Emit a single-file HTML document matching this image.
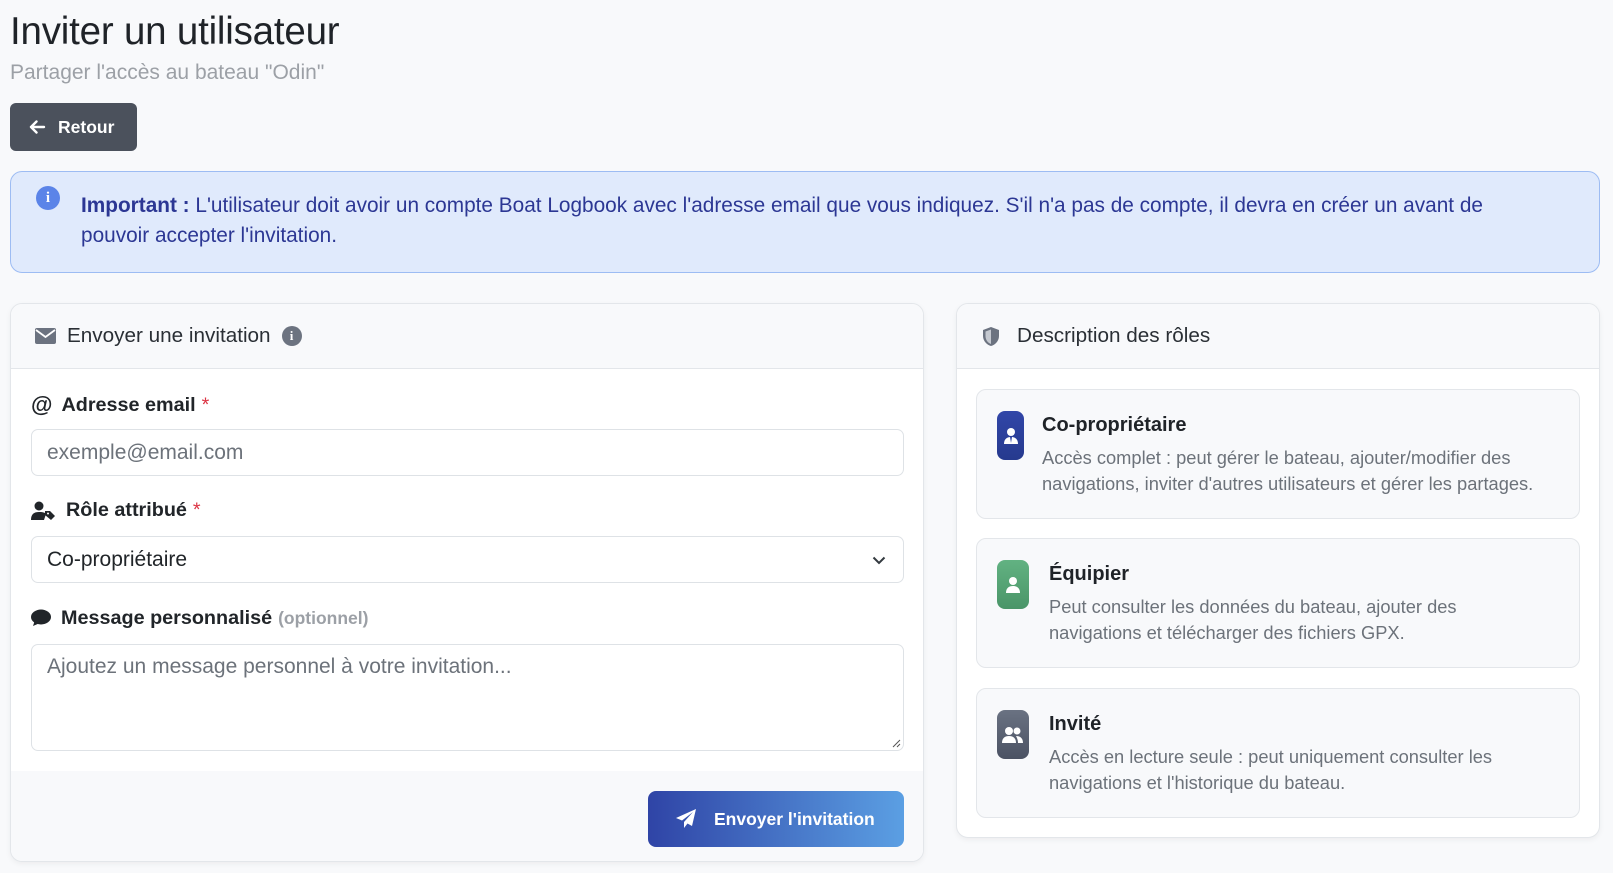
<!DOCTYPE html>
<html><head><meta charset="utf-8">
<style>
*{box-sizing:border-box;margin:0;padding:0}
body{width:1613px;height:873px;overflow:hidden;background:#f8f9fb;font-family:"Liberation Sans",sans-serif;color:#212529;position:relative}
.abs{position:absolute}
h1{position:absolute;left:10px;top:10px;font-size:38.5px;font-weight:400;color:#1f2328;letter-spacing:-0.2px}
.sub{left:10px;top:61px;font-size:21px;color:#9ca0a6}
.btn{left:10px;top:103px;width:127px;height:48px;background:#4b515c;border-radius:6px;color:#fff;font-size:17.5px;font-weight:700;display:flex;align-items:center;padding-left:18px}
.btn svg{margin-right:12px}
.alert{left:10px;top:171px;width:1590px;height:102px;background:#e0eafc;border:1px solid #9dbcf3;border-radius:12px}
.alert .ic{position:absolute;left:25px;top:14px;width:24px;height:24px;border-radius:50%;background:#5b84e8;color:#fff;font-weight:700;font-size:15px;text-align:center;line-height:24px;font-family:"Liberation Serif",serif}
.alert p{position:absolute;left:70px;top:19px;width:1470px;font-size:20.8px;line-height:30px;color:#2c3794}
.card{background:#fff;border:1px solid #e3e6ea;border-radius:12px;box-shadow:0 2px 6px rgba(0,0,0,.05);overflow:hidden}
.head{height:65px;background:#f8f9fb;border-bottom:1px solid #e3e6ea;display:flex;align-items:center;font-size:20.7px;color:#2a2f35}
.lbl{position:absolute;font-size:19.8px;font-weight:700;color:#212529;display:flex;align-items:center}
.lbl .star{color:#dc3545;margin-left:6px;font-weight:400}
.inp{position:absolute;left:20px;width:873px;border:1px solid #dee2e6;border-radius:7px;background:#fff;font-size:21px;padding-left:15px}
.role{position:absolute;left:19px;width:604px;height:130px;background:#f8f9fb;border:1px solid #e3e6ea;border-radius:10px}
.role .ico{position:absolute;left:20px;top:21px;height:49px;border-radius:8px;display:flex;align-items:center;justify-content:center}
.role .t{position:absolute;top:24px;font-size:20px;font-weight:700;color:#1f2328}
.role .d{position:absolute;top:55px;font-size:18.3px;line-height:26px;color:#6c727a;width:510px}
</style></head><body>
<h1>Inviter un utilisateur</h1>
<div class="abs sub">Partager l'accès au bateau "Odin"</div>
<div class="abs btn"><svg width="18" height="16" viewBox="0 0 18 16"><path d="M16 8H3M8.5 2.5L3 8l5.5 5.5" stroke="#fff" stroke-width="2.4" fill="none" stroke-linecap="round" stroke-linejoin="round"/></svg>Retour</div>
<div class="abs alert"><div class="ic">i</div><p><b>Important :</b> L'utilisateur doit avoir un compte Boat Logbook avec l'adresse email que vous indiquez. S'il n'a pas de compte, il devra en créer un avant de pouvoir accepter l'invitation.</p></div>

<div class="abs card" style="left:10px;top:303px;width:914px;height:559px">
 <div class="head" style="padding-left:24px">
  <svg width="21" height="16" viewBox="0 0 21 16" style="margin-right:11px"><rect x="0" y="0" width="21" height="16" rx="2" fill="#6c7380"/><path d="M1 2l9.5 7L20 2" stroke="#fff" stroke-width="1.8" fill="none"/></svg>
  Envoyer une invitation
  <span style="display:inline-block;width:20px;height:20px;border-radius:50%;background:#6c7380;color:#fff;font-size:13px;font-weight:700;text-align:center;line-height:20px;margin-left:11px;font-family:'Liberation Serif',serif">i</span>
 </div>
 <div class="lbl" style="left:20px;top:88px"><span style="font-size:22px;margin-right:9px">@</span>Adresse email<span class="star">*</span></div>
 <div class="inp" style="top:125px;height:47px;line-height:45px;color:#6c727a">exemple@email.com</div>
 <div class="lbl" style="left:20px;top:195px"><svg width="25" height="20" viewBox="0 0 25 20" style="margin-right:10px"><circle cx="8" cy="5" r="4.5" fill="#212529"/><path d="M0 19c0-6 3-8 8-8s6 1 7 2l-2 6z" fill="#212529"/><path d="M14 10l5 0 5 5-4 4-6-5z" fill="#212529"/><circle cx="17" cy="12.5" r="1" fill="#fff"/></svg>Rôle attribué<span class="star">*</span></div>
 <div class="inp" style="top:232px;height:47px;line-height:45px;color:#212529">Co-propriétaire<svg width="14" height="9" viewBox="0 0 14 9" style="position:absolute;right:17px;top:19px"><path d="M1.5 1.5L7 7l5.5-5.5" stroke="#343a40" stroke-width="2" fill="none"/></svg></div>
 <div class="lbl" style="left:20px;top:303px"><svg width="20" height="19" viewBox="0 0 20 19" style="margin-right:10px"><ellipse cx="10" cy="8" rx="10" ry="7.5" fill="#212529"/><path d="M2 17l2-6 5 3z" fill="#212529"/></svg>Message personnalisé<span style="color:#9ca0a6;font-size:17.5px;margin-left:6px">(optionnel)</span></div>
 <div class="inp" style="top:340px;height:107px;padding-top:10px;color:#6c727a">Ajoutez un message personnel à votre invitation...<svg width="9" height="9" viewBox="0 0 9 9" style="position:absolute;right:2px;bottom:2px"><path d="M8 1L1 8M8 5L5 8" stroke="#555" stroke-width="1"/></svg></div>
 <div style="position:absolute;left:0;top:467px;width:914px;height:92px;background:#f8f9fb"></div>
 <div style="position:absolute;left:637px;top:487px;width:256px;height:56px;border-radius:8px;background:linear-gradient(90deg,#2f44a6,#5b9fe3);color:#fff;font-size:17.5px;font-weight:700;display:flex;align-items:center;padding-left:28px">
  <svg width="21" height="20" viewBox="0 0 21 20" style="margin-right:17px"><path d="M20 0L0 9l6 2.5L17 3 8 13v6l3.5-4.5L16 17z" fill="#fff"/></svg>Envoyer l'invitation</div>
</div>

<div class="abs card" style="left:956px;top:303px;width:644px;height:535px">
 <div class="head" style="padding-left:24px">
  <svg width="20" height="21" viewBox="0 0 20 21" style="margin-right:16px"><path d="M10 1L2 4v6c0 5 4 9 8 10 4-1 8-5 8-10V4z" fill="#6c7380"/><path d="M10 3.5v14.5c-3-1-5.5-4-5.5-8V5.5z" fill="#c5c9d0"/></svg>
  Description des rôles
 </div>
 <div class="role" style="top:85px">
  <div class="ico" style="width:27px;background:linear-gradient(#3146a8,#263a8e)"><svg width="16" height="18" viewBox="0 0 16 18"><circle cx="8" cy="5" r="4" fill="#fff"/><path d="M1 17c0-5 3-7 7-7s7 2 7 7z" fill="#fff"/><path d="M7 10l1 6 1-6z" fill="#2e44a4"/></svg></div>
  <div class="t" style="left:65px">Co-propriétaire</div>
  <div class="d" style="left:65px">Accès complet : peut gérer le bateau, ajouter/modifier des navigations, inviter d'autres utilisateurs et gérer les partages.</div>
 </div>
 <div class="role" style="top:234px">
  <div class="ico" style="width:32px;background:linear-gradient(#62b282,#4a9568)"><svg width="16" height="18" viewBox="0 0 16 18"><circle cx="8" cy="5" r="4" fill="#fff"/><path d="M1 17c0-5 3-7 7-7s7 2 7 7z" fill="#fff"/></svg></div>
  <div class="t" style="left:72px">Équipier</div>
  <div class="d" style="left:72px;width:480px">Peut consulter les données du bateau, ajouter des navigations et télécharger des fichiers GPX.</div>
 </div>
 <div class="role" style="top:384px">
  <div class="ico" style="width:32px;background:linear-gradient(#6a7282,#4b5263)"><svg width="22" height="18" viewBox="0 0 22 18"><circle cx="7" cy="5" r="4" fill="#fff"/><circle cx="15" cy="5" r="3.5" fill="#fff"/><path d="M0 17c0-5 3-7 7-7s7 2 7 7z" fill="#fff"/><path d="M14 10c4 0 7 2 7 7h-5c0-3-1-5-2-7z" fill="#fff"/></svg></div>
  <div class="t" style="left:72px">Invité</div>
  <div class="d" style="left:72px;width:480px">Accès en lecture seule : peut uniquement consulter les navigations et l'historique du bateau.</div>
 </div>
</div>
</body></html>
